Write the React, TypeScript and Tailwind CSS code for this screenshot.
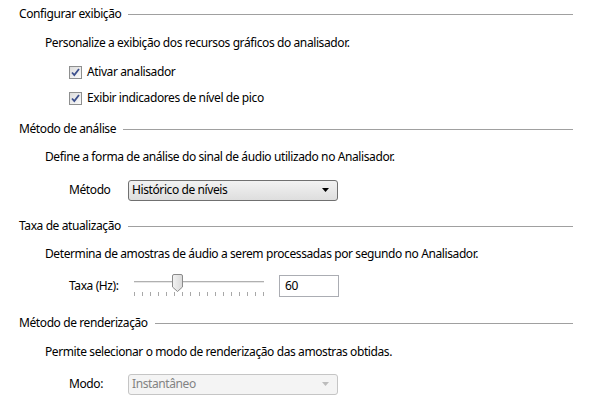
const font = "font-['Segoe_UI','Noto_Sans','Open_Sans',sans-serif]";

function Header({ title, className = '' }: { title: string; className?: string }): JSX.Element {
  return (
    <div className={`flex h-[20px] items-center pl-[19px] pr-[18px] ${className}`}>
      <span className="whitespace-nowrap">{title}</span>
      <div className="ml-[7px] h-px flex-1 bg-[#a0a0a0]" />
    </div>
  );
}

function Desc({ children, className = '' }: { children: React.ReactNode; className?: string }): JSX.Element {
  return (
    <div className={`flex h-[20px] items-center whitespace-nowrap pl-[45px] ${className}`}>
      {children}
    </div>
  );
}

function Checkbox({ label, className = '' }: { label: string; className?: string }): JSX.Element {
  return (
    <div className={`flex h-[20px] items-center pl-[69px] ${className}`}>
      <span className="flex h-[13px] w-[13px] items-center justify-center border border-[#8e8f8f] bg-gradient-to-br from-[#dcdcdc] to-[#fbfbfb]">
        <svg width="11" height="11" viewBox="0 0 11 11">
          <path d="M2 5.5 L4.3 8 L9 2" fill="none" stroke="#3c4f8c" strokeWidth="1.8" />
        </svg>
      </span>
      <span className="ml-[5px] whitespace-nowrap">{label}</span>
    </div>
  );
}

function Select({ value, disabled }: { value: string; disabled?: boolean }): JSX.Element {
  return (
    <div
      className={`flex h-[21px] w-[210px] items-center justify-between rounded-[3px] border pl-[3px] pr-[8px] ${
        disabled
          ? 'border-[#c5c5c5] bg-[#f4f4f4] text-[#838383]'
          : 'border-[#707070] bg-gradient-to-b from-[#f2f2f2] to-[#dedede]'
      }`}
    >
      <span className="whitespace-nowrap">{value}</span>
      <svg width="7" height="4" viewBox="0 0 7 4">
        <path d="M0 0 H7 L3.5 4 Z" fill={disabled ? '#bcbcbc' : '#000'} />
      </svg>
    </div>
  );
}

function Slider(): JSX.Element {
  const ticks = Array.from({ length: 17 }, (_, i) => i);
  return (
    <div className="relative h-[22px] w-[130px]">
      <div className="absolute left-0 right-0 top-[6px] h-[2px] border-t border-[#b0b0b0] bg-[#e7e7e7]" />
      <div className="absolute left-[38px] top-[-1px]">
        <svg width="11" height="18" viewBox="0 0 11 18">
          <defs>
            <linearGradient id="th" x1="0" y1="0" x2="1" y2="0">
              <stop offset="0" stopColor="#f3f3f3" />
              <stop offset="1" stopColor="#d9d9d9" />
            </linearGradient>
          </defs>
          <path d="M0.5 2 Q0.5 0.5 2 0.5 H9 Q10.5 0.5 10.5 2 V13 L5.5 17.5 L0.5 13 Z" fill="url(#th)" stroke="#8a8a8a" />
        </svg>
      </div>
      <div className="absolute left-0 right-0 top-[17px] flex justify-between">
        {ticks.map((t) => (
          <div key={t} className="h-[4px] w-px bg-[#a8a8a8]" />
        ))}
      </div>
    </div>
  );
}

export default function App(): JSX.Element {
  return (
    <div className={`h-[408px] w-[591px] overflow-hidden bg-white pt-[4px] text-[12px] leading-none tracking-[-0.4px] text-black ${font}`}>
      <Header title="Configurar exibição" />
      <Desc className="mt-[9px]">Personalize a exibição dos recursos gráficos do analisador.</Desc>
      <Checkbox label="Ativar analisador" className="mt-[9px]" />
      <Checkbox label="Exibir indicadores de nível de pico" className="mt-[6px]" />

      <Header title="Método de análise" className="mt-[11px]" />
      <Desc className="mt-[8px]">Define a forma de análise do sinal de áudio utilizado no Analisador.</Desc>
      <div className="mt-[12px] flex h-[22px] items-center pl-[69px]">
        <span className="w-[59px]">Método</span>
        <Select value="Histórico de níveis" />
      </div>

      <Header title="Taxa de atualização" className="mt-[15px]" />
      <Desc className="mt-[8px]">Determina de amostras de áudio a serem processadas por segundo no Analisador.</Desc>
      <div className="mt-[11px] flex h-[22px] items-center pl-[69px]">
        <span className="w-[65px]">Taxa (Hz):</span>
        <Slider />
        <div className="ml-[15px] flex h-[22px] w-[60px] items-center border border-[#abadb3] bg-white pl-[5px]">
          60
        </div>
      </div>

      <Header title="Método de renderização" className="mt-[16px]" />
      <Desc className="mt-[9px]">Permite selecionar o modo de renderização das amostras obtidas.</Desc>
      <div className="mt-[11px] flex h-[22px] items-center pl-[69px]">
        <span className="w-[59px]">Modo:</span>
        <Select value="Instantâneo" disabled />
      </div>
    </div>
  );
}
